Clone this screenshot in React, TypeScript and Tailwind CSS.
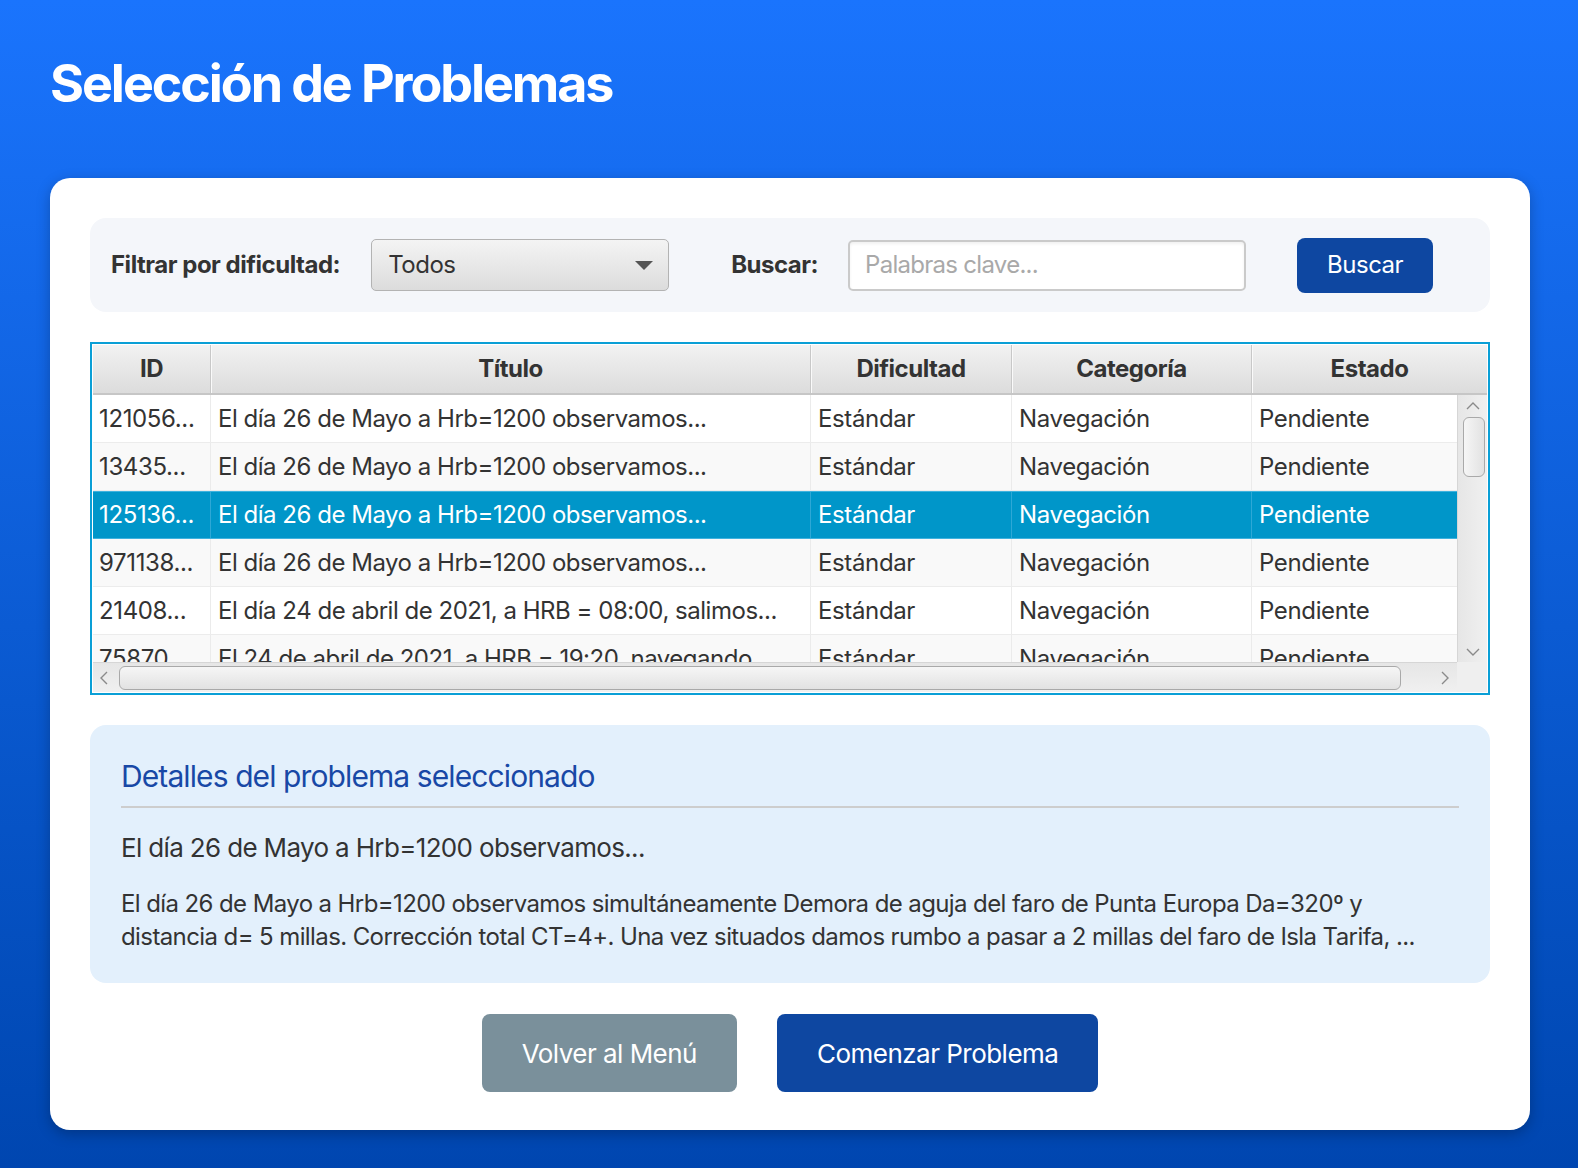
import React from "react";

interface Problem {
  id: string;
  title: string;
  difficulty: string;
  category: string;
  status: string;
}

const problems: Problem[] = [
  { id: "121056...", title: "El día 26 de Mayo a Hrb=1200 observamos...", difficulty: "Estándar", category: "Navegación", status: "Pendiente" },
  { id: "13435...", title: "El día 26 de Mayo a Hrb=1200 observamos...", difficulty: "Estándar", category: "Navegación", status: "Pendiente" },
  { id: "125136...", title: "El día 26 de Mayo a Hrb=1200 observamos...", difficulty: "Estándar", category: "Navegación", status: "Pendiente" },
  { id: "971138...", title: "El día 26 de Mayo a Hrb=1200 observamos...", difficulty: "Estándar", category: "Navegación", status: "Pendiente" },
  { id: "21408...", title: "El día 24 de abril de 2021, a HRB = 08:00, salimos...", difficulty: "Estándar", category: "Navegación", status: "Pendiente" },
  { id: "75870...", title: "El 24 de abril de 2021, a HRB = 19:20, navegando...", difficulty: "Estándar", category: "Navegación", status: "Pendiente" },
];

const SELECTED = 2;

const Chevron = ({ dir }: { dir: "up" | "down" | "left" | "right" }) => {
  const vertical = dir === "up" || dir === "down";
  const pts = {
    up: "2,9 8,3 14,9",
    down: "2,3 8,9 14,3",
    left: "9,2 3,8 9,14",
    right: "3,2 9,8 3,14",
  }[dir];
  return (
    <svg width={vertical ? 16 : 12} height={vertical ? 12 : 16} viewBox={vertical ? "0 0 16 12" : "0 0 12 16"}>
      <polyline points={pts} fill="none" stroke="#8a8a8a" strokeWidth="1.4" />
    </svg>
  );
};

const App = () => {
  return (
    <div className="min-h-screen w-full bg-gradient-to-b from-[#1a74fd] to-[#0046b0] pl-[50px] pr-[48px] pt-[58px] font-['Inter','Liberation_Sans',sans-serif]">
      <h1 className="text-[52px] font-bold leading-none tracking-[-0.04em] text-white">Selección de Problemas</h1>

      <div className="mt-[68px] rounded-[20px] bg-white px-10 pt-10 pb-[38px] shadow-[0_4px_14px_rgba(0,0,0,0.25)]">
        {/* Filter bar */}
        <div className="flex h-[94px] items-center rounded-2xl bg-[#f4f6fa] px-[21px]">
          <span className="text-[24px] font-bold tracking-[-0.02em] text-[#333]">Filtrar por dificultad:</span>
          <div className="ml-[31px] flex h-[52px] w-[298px] items-center justify-between rounded-[5px] border-[1.5px] border-[#b3b3b3] bg-gradient-to-b from-[#f4f4f4] to-[#dcdcdc] pl-[16px] pr-[15px]">
            <span className="text-[24px] tracking-[-0.02em] text-[#333]">Todos</span>
            <svg width="18" height="9" viewBox="0 0 18 9">
              <polygon points="0,0 18,0 9,9" fill="#555" />
            </svg>
          </div>
          <span className="ml-[62px] text-[24px] font-bold tracking-[-0.02em] text-[#333]">Buscar:</span>
          <div className="ml-[30px] flex h-[51px] w-[398px] items-center rounded-[5px] border-2 border-[#cacaca] bg-white pl-[15px] shadow-[inset_0_2px_3px_rgba(0,0,0,0.06)]">
            <span className="text-[24px] tracking-[-0.03em] text-[#a9a9a9]">Palabras clave...</span>
          </div>
          <button className="ml-[51px] h-[55px] w-[136px] rounded-[8px] bg-[#0e47a1] text-[24px] tracking-[-0.02em] text-white">Buscar</button>
        </div>

        {/* Table */}
        <div className="mt-[30px] border-2 border-[#0a9fd6] bg-white p-px">
          <div className="flex h-[50px] border-b-2 border-[#c6c6c6] bg-gradient-to-b from-[#f2f2f2] to-[#dcdcdc] text-[24px] font-bold tracking-[-0.02em] text-[#333]">
            <div className="flex w-[118px] items-center justify-center border-r border-[#c8c8c8]">ID</div>
            <div className="flex w-[600px] items-center justify-center border-r border-[#c8c8c8] shadow-[inset_1px_0_0_#fafafa]">Título</div>
            <div className="flex w-[201px] items-center justify-center border-r border-[#c8c8c8] shadow-[inset_1px_0_0_#fafafa]">Dificultad</div>
            <div className="flex w-[240px] items-center justify-center border-r border-[#c8c8c8] shadow-[inset_1px_0_0_#fafafa]">Categoría</div>
            <div className="flex flex-1 items-center justify-center shadow-[inset_1px_0_0_#fafafa]">Estado</div>
          </div>

          <div className="flex h-[267px]">
            <div className="flex-1 overflow-hidden">
              {problems.map((p, i) => {
                const sel = i === SELECTED;
                const rowBg = sel ? "bg-[#0096c9] text-white border-y border-[#3fb2de]" : i % 2 === 0 ? "bg-white text-[#333] border-b border-[#ececec]" : "bg-[#f9f9f9] text-[#333] border-b border-[#ececec]";
                const cellBorder = sel ? "border-r border-[#2ea8d6]" : "border-r border-[#ebebeb]";
                return (
                  <div key={i} className={`flex h-[48px] items-center whitespace-nowrap text-[24px] tracking-[-0.015em] ${rowBg}`}>
                    <div className={`flex h-full w-[118px] items-center overflow-hidden pl-[6px] ${cellBorder}`}>{p.id}</div>
                    <div className={`flex h-full w-[600px] items-center overflow-hidden pl-[7px] tracking-[-0.02em] ${cellBorder}`}>{p.title}</div>
                    <div className={`flex h-full w-[201px] items-center overflow-hidden pl-[7px] ${cellBorder}`}>{p.difficulty}</div>
                    <div className={`flex h-full w-[240px] items-center overflow-hidden pl-[7px] ${cellBorder}`}>{p.category}</div>
                    <div className="flex h-full flex-1 items-center overflow-hidden pl-[7px]">{p.status}</div>
                  </div>
                );
              })}
            </div>
            {/* vertical scrollbar */}
            <div className="flex w-[30px] flex-col items-center border-l border-[#d6d6d6] bg-gradient-to-r from-[#e6e6e6] to-[#f0f0f0] pt-[5px] pb-[4px]">
              <Chevron dir="up" />
              <div className="mt-[5px] ml-[3px] h-[60px] w-[22px] rounded-[6px] border border-[#a9a9a9] bg-gradient-to-r from-[#f6f6f6] to-[#e2e2e2]" />
              <div className="flex-1" />
              <Chevron dir="down" />
            </div>
          </div>

          {/* horizontal scrollbar */}
          <div className="flex h-[30px]">
            <div className="flex flex-1 items-center border-t border-[#d6d6d6] bg-gradient-to-b from-[#e6e6e6] to-[#f0f0f0] pl-[5px] pr-[6px]">
              <Chevron dir="left" />
              <div className="ml-[9px] h-[24px] w-[1282px] rounded-[6px] border border-[#a9a9a9] bg-gradient-to-b from-[#f6f6f6] to-[#e2e2e2]" />
              <div className="flex-1" />
              <Chevron dir="right" />
            </div>
            <div className="w-[30px] bg-[#efefef]" />
          </div>
        </div>

        {/* Details */}
        <div className="mt-[30px] rounded-2xl bg-[#e3f0fc] px-[31px] pt-[33px] pb-[30px]">
          <h2 className="text-[30px] leading-[36px] tracking-[-0.03em] text-[#1848a6]">Detalles del problema seleccionado</h2>
          <div className="mt-[12px] h-[2px] bg-[#cdcdcd]" />
          <p className="mt-[25px] text-[26px] leading-[30px] tracking-[-0.025em] text-[#333]">El día 26 de Mayo a Hrb=1200 observamos...</p>
          <p className="mt-[24px] text-[24px] leading-[33px] tracking-[-0.025em] text-[#333]">
            El día 26 de Mayo a Hrb=1200 observamos simultáneamente Demora de aguja del faro de Punta Europa Da=320º y
            <br />
            distancia d= 5 millas. Corrección total CT=4+. Una vez situados damos rumbo a pasar a 2 millas del faro de Isla Tarifa, ...
          </p>
        </div>

        {/* Actions */}
        <div className="mt-[31px] flex justify-center gap-10">
          <button className="h-[78px] rounded-[8px] bg-[#7a909b] px-10 text-[26px] tracking-[-0.02em] text-white">Volver al Menú</button>
          <button className="h-[78px] rounded-[8px] bg-[#0e47a1] px-10 text-[26px] tracking-[-0.02em] text-white">Comenzar Problema</button>
        </div>
      </div>
    </div>
  );
};

export default App;
